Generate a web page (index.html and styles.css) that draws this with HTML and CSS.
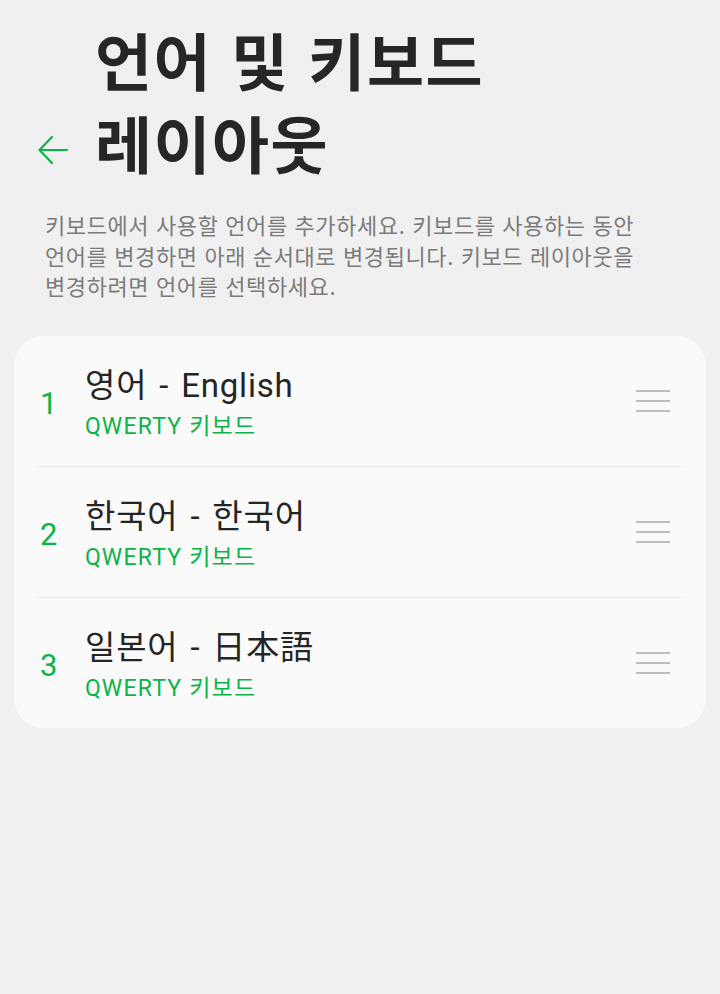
FILE: index.html
```html
<!DOCTYPE html>
<html lang="ko">

<head>
  <meta charset="UTF-8">
  <title>언어 및 키보드 레이아웃</title>
  <link rel="stylesheet" href="styles.css">
</head>

<body>
  <header class="top">
    <button class="back" aria-label="뒤로">
      <svg width="30" height="30" viewBox="0 0 30 30">
        <path d="M29 15H2M14 2L1.5 15 14 28" fill="none" stroke="#0cb446" stroke-width="2.2" stroke-linecap="round" stroke-linejoin="round" />
      </svg>
    </button>
    <h1>언어 및 키보드<br>레이아웃</h1>
  </header>

  <p class="desc">키보드에서 사용할 언어를 추가하세요. 키보드를 사용하는 동안 언어를 변경하면 아래 순서대로 변경됩니다. 키보드 레이아웃을 변경하려면 언어를 선택하세요.</p>

  <ul class="langs">
    <li class="lang">
      <span class="num">1</span>
      <div class="info">
        <div class="name">영어 - English</div>
        <div class="layout">QWERTY 키보드</div>
      </div>
      <span class="handle"><i></i><i></i><i></i></span>
    </li>
    <li class="lang">
      <span class="num">2</span>
      <div class="info">
        <div class="name">한국어 - 한국어</div>
        <div class="layout">QWERTY 키보드</div>
      </div>
      <span class="handle"><i></i><i></i><i></i></span>
    </li>
    <li class="lang">
      <span class="num">3</span>
      <div class="info">
        <div class="name">일본어 - 日本語</div>
        <div class="layout">QWERTY 키보드</div>
      </div>
      <span class="handle"><i></i><i></i><i></i></span>
    </li>
  </ul>
</body>

</html>
```

FILE: styles.css
```css
body {
  background: #f0f0f0;
  color: #252525;
  font-family: Roboto, "Noto Sans CJK KR", sans-serif;
  margin: 0;
}

.top {
  display: flex;
  align-items: flex-end;
  padding: 18px 0 0 38px;
}

.back {
  box-sizing: border-box;
  border: none;
  background: none;
  padding: 14px 0 0;
  width: 30px;
  height: 83px;
  margin-right: 27px;
  display: flex;
  align-items: center;
}

h1 {
  margin: 0;
  font-family: "Noto Sans CJK KR", sans-serif;
  font-size: 62px;
  font-weight: 700;
  line-height: 83px;
  letter-spacing: 1.5px;
  color: #262626;
}

.desc {
  margin: 25px 45px 0;
  font-family: "Noto Sans CJK KR", sans-serif;
  font-size: 22px;
  line-height: 30.5px;
  color: #7b7b7b;
  letter-spacing: 0.6px;
  word-break: keep-all;
}

.langs {
  list-style: none;
  margin: 35px 14px 0;
  padding: 0;
  background: #fafafa;
  border-radius: 30px;
}

.lang {
  display: flex;
  align-items: center;
  height: 130px;
  margin: 0 25px;
  border-bottom: 1px solid #e2e2e2;
}

.lang:last-child {
  border-bottom: none;
}

.num {
  width: 45px;
  padding: 6px 0 0 1px;
  font-size: 31px;
  color: #0cb446;
}

.info {
  flex: 1;
  padding-top: 6px;
}

.name {
  font-size: 33px;
  line-height: 40px;
  letter-spacing: 0.8px;
  word-spacing: 3px;
}

.layout {
  margin-top: 6px;
  font-size: 23px;
  line-height: 30px;
  letter-spacing: 1.2px;
  color: #0cb446;
}

.handle {
  display: flex;
  flex-direction: column;
  gap: 8px;
  width: 34px;
  margin-right: 11px;
}

.handle i {
  height: 2px;
  background: #bdbdbd;
}
```
